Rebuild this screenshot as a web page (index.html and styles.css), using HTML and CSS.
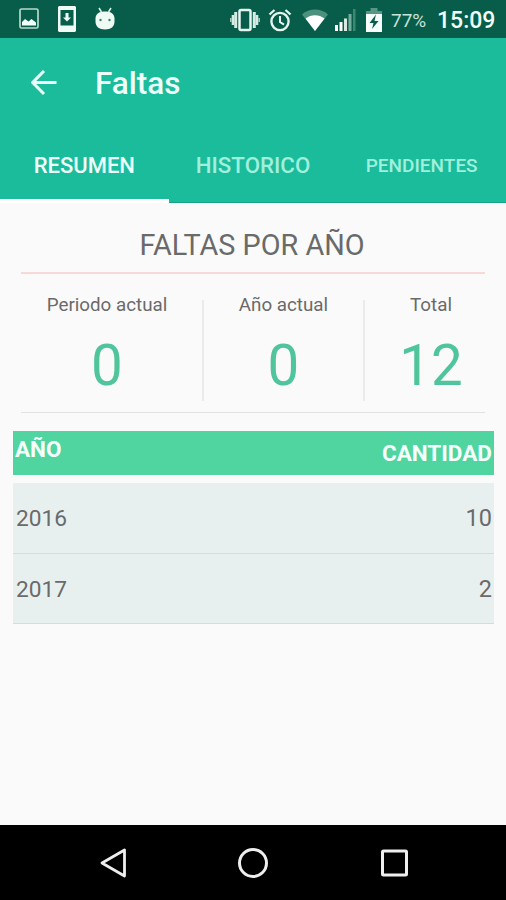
FILE: index.html
```html
<!DOCTYPE html>
<html lang="es">
<head>
    <meta charset="UTF-8">
    <meta name="viewport" content="width=device-width, initial-scale=1.0">
    <title>Faltas</title>
    <link rel="stylesheet" href="styles.css">
</head>
<body>
    <div class="screen">
        <div class="status-bar">
            <div class="notifications">
                <svg width="20" height="22" viewBox="0 0 20 22">
                    <rect x="1" y="1" width="18" height="19" rx="1.5" fill="none" stroke="#b5d9cc" stroke-width="1.7"/>
                    <path d="M3 17.500V14l3-3 3.500 2.500 3-2.500 4.500 3.500v3z" fill="#f2fffa"/>
                </svg>
                <svg width="18" height="26" viewBox="0 0 18 26">
                    <path fill-rule="evenodd" d="M1 0h16l1 1v24l-1 1H1l-1-1V1zM2.500 4v15.500h13V4z" fill="#effaf5"/>
                    <path d="M7.500 7h3v4.500H13l-4 4-4-4h2.500z" fill="#effaf5"/>
                </svg>
                <svg width="20" height="24" viewBox="0 0 20 24">
                    <path d="M4 1l2.500 4M16 1l-2.500 4" stroke="#d9eee6" stroke-width="1.600"/>
                    <path d="M.5 11C1 6.500 4.500 4.500 10 4.500s9 2 9.500 6.500v3.500c0 5-3.500 8-9.500 8s-9.500-3-9.500-8z" fill="#effaf5"/>
                    <circle cx="5.500" cy="13" r="1.200" fill="#3d7f6b"/>
                    <circle cx="14.500" cy="13" r="1.200" fill="#3d7f6b"/>
                </svg>
            </div>
            <div class="system">
                <svg width="32" height="24" viewBox="0 0 32 24">
                    <rect x="10.500" y="2" width="11" height="20" rx="1.500" fill="none" stroke="#e6f5ef" stroke-width="2.500"/>
                    <path d="M6.700 4v16M25.300 4v16" stroke="#d5ebe3" stroke-width="3"/>
                    <path d="M4 7v10M28 7v10" stroke="#d5ebe3" stroke-width="2.600"/>
                    <path d="M1.800 10v4M30.200 10v4" stroke="#a9cfc2" stroke-width="1.500"/>
                </svg>
                <svg class="alarm" width="24" height="24" viewBox="0 0 24 24" fill="none" stroke="#e6f5ef">
                    <circle cx="12" cy="13.500" r="8.600" stroke-width="2.400"/>
                    <path d="M1.500 6.500l5-4.500M22.500 6.500l-5-4.500" stroke-width="2.300"/>
                    <path d="M12 8v6l4 2.700" stroke-width="2"/>
                </svg>
                <svg class="wifi" width="26" height="22" viewBox="0 0 26 22">
                    <path d="M0 5.500C7-1.300 19-1.300 26 5.500L13 22z" fill="#4c917d"/>
                    <path d="M3.500 9.500C9 5 17 5 22.500 9.500L13 22z" fill="#fff"/>
                </svg>
                <svg class="signal" width="21" height="22" viewBox="0 0 21 22">
                    <path d="M0 16h3v6H0zM4.500 13h3v9h-3z" fill="#fff"/>
                    <path d="M9 9.500h3V22H9z" fill="#d7e9e2"/>
                    <path d="M13.500 5h3v17h-3z" fill="#75ac9b"/>
                    <path d="M18 0h2.500v22H18z" fill="#3f8771"/>
                </svg>
                <svg class="battery" width="16" height="24" viewBox="0 0 16 24">
                    <path d="M4.500 0h7v3H16v4H0V3h4.500z" fill="#579783"/>
                    <path d="M0 6h16v18H0z" fill="#f6fffb"/>
                    <path d="M10 6.500L3.500 15h4L6 21l6.500-8H8.500z" fill="#075d49"/>
                </svg>
                <span class="percent">77%</span>
                <span class="clock">15:09</span>
            </div>
        </div>

        <header class="app-header">
            <div class="toolbar">
                <svg width="26" height="26" viewBox="0 0 26 26" fill="none" stroke="#e9fff8" stroke-width="3">
                    <path d="M25.500 12.500H2M13 1L1.700 12.500 13 24"/>
                </svg>
                <h1 class="title">Faltas</h1>
            </div>
            <nav class="tabs">
                <div class="tab active"><span class="tab-resumen">RESUMEN</span></div>
                <div class="tab"><span class="tab-historico">HISTORICO</span></div>
                <div class="tab"><span class="tab-pendientes">PENDIENTES</span></div>
            </nav>
        </header>

        <main class="content">
            <section class="summary">
                <h2 class="summary-title">FALTAS POR AÑO</h2>
                <div class="stats">
                    <div class="stat">
                        <div class="stat-label">Periodo actual</div>
                        <div class="stat-value">0</div>
                    </div>
                    <div class="stat">
                        <div class="stat-label">Año actual</div>
                        <div class="stat-value">0</div>
                    </div>
                    <div class="stat">
                        <div class="stat-label">Total</div>
                        <div class="stat-value">12</div>
                    </div>
                </div>
            </section>

            <section class="list">
                <div class="list-head">
                    <span class="head-year">AÑO</span>
                    <span class="head-count">CANTIDAD</span>
                </div>
                <div class="list-row">
                    <span class="year">2016</span>
                    <span class="count">10</span>
                </div>
                <div class="list-row">
                    <span class="year">2017</span>
                    <span class="count">2</span>
                </div>
            </section>
        </main>

        <div class="nav-bar">
            <svg width="30" height="32" viewBox="0 0 30 32" fill="none" stroke="#eee" stroke-width="2.800" stroke-linejoin="round">
                <path d="M25.500 3v26L3 16z"/>
            </svg>
            <svg width="32" height="32" viewBox="0 0 32 32" fill="none" stroke="#eee" stroke-width="3">
                <circle cx="15" cy="16" r="13.500"/>
            </svg>
            <svg width="30" height="32" viewBox="0 0 30 32" fill="none" stroke="#eee" stroke-width="3">
                <rect x="3.500" y="4" width="24" height="24" rx="1"/>
            </svg>
        </div>
    </div>
</body>
</html>
```
FILE: styles.css
```css
* {
    margin: 0;
    padding: 0;
    box-sizing: border-box;
}

body {
    font-family: Roboto, 'Liberation Sans', sans-serif;
    background: #fafafa;
    color: #6a6a6a;
}

svg {
    display: block;
    flex: none;
}

.screen {
    display: flex;
    flex-direction: column;
    height: 900px;
    width: 506px;
    overflow: hidden;
}

.status-bar {
    display: flex;
    justify-content: space-between;
    height: 38px;
    padding: 0 12px 0 19px;
    background: #075d49;
    flex: none;
}

.notifications,
.system {
    display: flex;
    align-items: center;
}

.notifications {
    gap: 19px;
}

.system {
    padding-top: 2px;
}

.alarm {
    margin-left: 7px;
}

.wifi {
    margin-left: 10px;
}

.signal {
    margin-left: 7px;
}

.battery {
    margin-left: 10px;
}

.percent {
    width: 46px;
    margin-left: 9px;
    font-size: 19px;
    color: #c8e2d9;
}

.clock {
    width: 57px;
    font-size: 23px;
    font-weight: 500;
    color: #f2fffa;
}

.app-header {
    height: 165px;
    background: #1abc9c;
    border-bottom: 1px solid #15a286;
    flex: none;
}

.toolbar {
    display: flex;
    align-items: center;
    height: 89px;
    padding-left: 31px;
}

.title {
    margin-left: 38px;
    padding-top: 1px;
    font-size: 31.5px;
    font-weight: 500;
    color: #effffa;
}

.tabs {
    display: flex;
    height: 75px;
}

.tab {
    display: flex;
    flex: 1;
    align-items: center;
    justify-content: center;
    padding-top: 1px;
    font-size: 22px;
    font-weight: 500;
    color: #a0f0dc;
    white-space: nowrap;
}

.tab.active {
    color: #effffa;
    border-bottom: 4px solid #fff;
    height: 76px;
    padding-top: 5px;
}

.tab-historico {
    font-size: 22.3px;
}

.tab-pendientes {
    padding-top: 1px;
    font-size: 19px;
}

.content {
    flex: 1;
}

.summary {
    margin: 0 21px;
    border-bottom: 1px solid #e2e2e2;
}

.summary-title {
    height: 71px;
    padding: 12px 2px 0 0;
    border-bottom: 2px solid #f6d9d8;
    font-size: 28.8px;
    font-weight: 400;
    line-height: 60px;
    text-align: center;
}

.stats {
    display: grid;
    grid-template-columns: 183px 161px 120px;
    height: 138px;
    padding: 19px 0 11px;
}

.stat {
    padding-right: 2px;
    text-align: center;
    /* divider, shorter than the cell */
    background: linear-gradient(#ebebeb, #ebebeb) no-repeat right 7px / 2px 101px;
}

.stat:first-child {
    padding-right: 11px;
}

.stat:last-child {
    padding: 0 0 0 12px;
    background: none;
}

.stat-label {
    font-size: 18.8px;
    line-height: 24px;
}

.stat-value {
    font-size: 56.5px;
    line-height: 98px;
    color: #50c59c;
}

.list {
    margin: 18px 12px 0 13px;
}

.list-head {
    display: flex;
    justify-content: space-between;
    height: 44px;
    margin-bottom: 8px;
    padding: 0 2px;
    background: #51d5a0;
    color: #f5fffb;
    font-size: 22.5px;
    font-weight: 700;
}

.head-year {
    line-height: 36px;
}

.head-count {
    line-height: 44px;
}

.list-row {
    display: flex;
    justify-content: space-between;
    height: 71px;
    padding: 0 2px 0 3px;
    background: #e8f0ef;
    border-bottom: 1px solid #d5dddc;
    font-size: 22.7px;
    line-height: 71px;
}

.list-row:last-child {
    height: 70px;
}

.count {
    font-size: 23.5px;
}

.nav-bar {
    display: flex;
    align-items: center;
    justify-content: space-between;
    height: 75px;
    padding: 1px 97px 0 99px;
    background: #000;
    flex: none;
}
```
